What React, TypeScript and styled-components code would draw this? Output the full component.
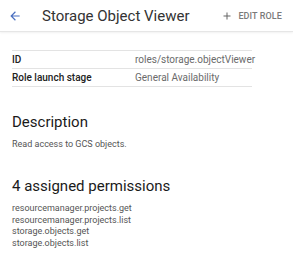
import React from 'react';
import styled, { createGlobalStyle } from 'styled-components';

const GlobalStyle = createGlobalStyle`
  html, body {
    margin: 0;
    padding: 0;
    background: #ffffff;
  }
  body {
    font-family: Roboto, "Liberation Sans", Arial, sans-serif;
    color: #212121;
  }
`;

const Page = styled.div`
  width: 293px;
  height: 258px;
  overflow: hidden;
  background: #ffffff;
`;

const Header = styled.div`
  display: flex;
  align-items: center;
  height: 31px;
  padding: 0 11px 0 8px;
  border-bottom: 1px solid #e6e6e6;
  box-shadow: 0 1px 2px rgba(0, 0, 0, 0.06);
`;

const BackButton = styled.div`
  display: flex;
  align-items: center;
  width: 34px;
  color: #4a6fc0;
`;

const Title = styled.h1`
  flex: 1;
  margin: 0;
  font-size: 15px;
  font-weight: 400;
  color: #333333;
`;

const EditButton = styled.div`
  display: flex;
  align-items: center;
  gap: 5px;
  font-size: 9px;
  font-weight: 500;
  letter-spacing: 0.1px;
  color: #7a7a7a;
`;

const Content = styled.div`
  padding: 18px 12px 0 12px;
`;

const InfoTable = styled.div`
  width: 240px;
  border-top: 1px solid #e3e3e3;
`;

const InfoRow = styled.div`
  display: grid;
  grid-template-columns: 123px 1fr;
  align-items: center;
  height: 17px;
  border-bottom: 1px solid #e3e3e3;
  font-size: 10px;
`;

const InfoLabel = styled.div`
  font-weight: 500;
  color: #222222;
`;

const InfoValue = styled.div`
  color: #6b6b6b;
  white-space: nowrap;
`;

const SectionTitle = styled.h2`
  margin: 0;
  font-size: 15px;
  font-weight: 400;
  color: #1a1a1a;
  line-height: 18px;
`;

const Section = styled.div<{ $top: number }>`
  margin-top: ${(p) => p.$top}px;
`;

const BodyText = styled.p`
  margin: 8px 0 0 0;
  font-size: 9px;
  color: #555555;
`;

const PermissionList = styled.ul`
  list-style: none;
  margin: 8px 0 0 0;
  padding: 0;
`;

const PermissionItem = styled.li`
  font-size: 9px;
  line-height: 11.6px;
  color: #555555;
`;

const permissions = [
  'resourcemanager.projects.get',
  'resourcemanager.projects.list',
  'storage.objects.get',
  'storage.objects.list',
];

const App: React.FC = () => {
  return (
    <Page>
      <GlobalStyle />
      <Header>
        <BackButton>
          <svg width="14" height="14" viewBox="0 0 24 24" fill="currentColor">
            <path d="M20 11H7.83l5.59-5.59L12 4l-8 8 8 8 1.41-1.41L7.83 13H20v-2z" />
          </svg>
        </BackButton>
        <Title>Storage Object Viewer</Title>
        <EditButton>
          <svg width="12" height="12" viewBox="0 0 24 24" fill="#666666">
            <path d="M19 13h-6v6h-2v-6H5v-2h6V5h2v6h6v2z" />
          </svg>
          EDIT ROLE
        </EditButton>
      </Header>

      <Content>
        <InfoTable>
          <InfoRow>
            <InfoLabel>ID</InfoLabel>
            <InfoValue>roles/storage.objectViewer</InfoValue>
          </InfoRow>
          <InfoRow>
            <InfoLabel>Role launch stage</InfoLabel>
            <InfoValue>General Availability</InfoValue>
          </InfoRow>
        </InfoTable>

        <Section $top={26}>
          <SectionTitle>Description</SectionTitle>
          <BodyText>Read access to GCS objects.</BodyText>
        </Section>

        <Section $top={28}>
          <SectionTitle>4 assigned permissions</SectionTitle>
          <PermissionList>
            {permissions.map((p) => (
              <PermissionItem key={p}>{p}</PermissionItem>
            ))}
          </PermissionList>
        </Section>
      </Content>
    </Page>
  );
};

export default App;
